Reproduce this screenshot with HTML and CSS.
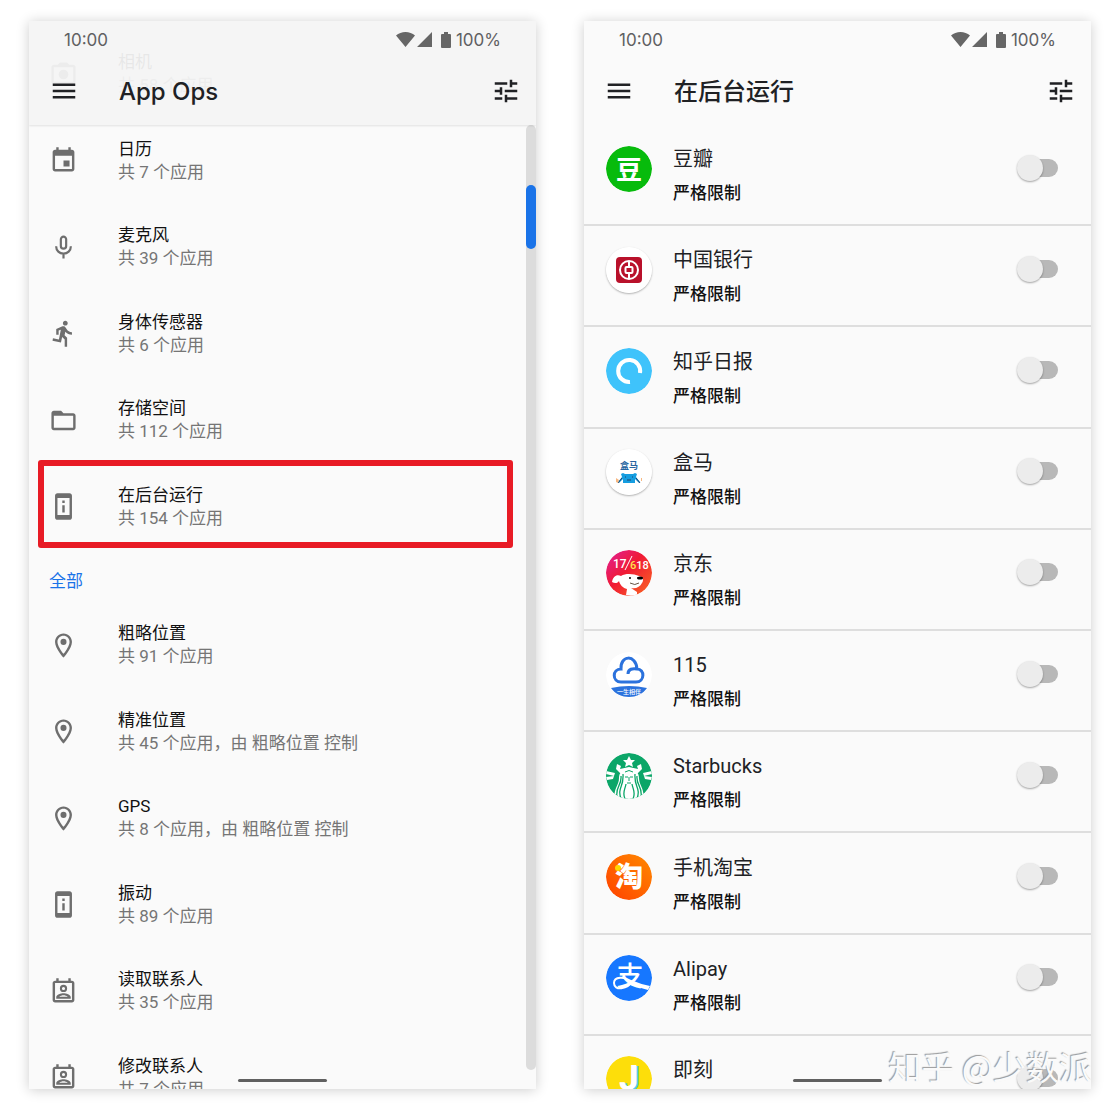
FILE: index.html
```html
<!DOCTYPE html>
<html lang="zh-CN">
<head>
<meta charset="utf-8">
<meta name="viewport" content="width=device-width, initial-scale=1">
<title>App Ops</title>
<link rel="stylesheet" href="styles.css">
</head>
<body>
<svg class="sprite" aria-hidden="true">
  <symbol id="menu" viewBox="0 0 24 24"><path d="M3 18h18v-2H3v2zm0-5h18v-2H3v2zm0-7v2h18V6H3z"/></symbol>
  <symbol id="tune" viewBox="0 0 24 24"><path d="M3 17v2h6v-2H3zM3 5v2h10V5H3zm10 16v-2h8v-2h-8v-2h-2v6h2zM7 9v2H3v2h4v2h2V9H7zm14 4v-2H11v2h10zm-6-4h2V7h4V5h-4V3h-2v6z"/></symbol>
  <symbol id="camera" viewBox="0 0 24 24"><path fill-rule="evenodd" d="M20 4h-3.200L15 2H9L7.200 4H4c-1.100 0-2 .9-2 2v12c0 1.100.9 2 2 2h16c1.100 0 2-.9 2-2V6c0-1.100-.9-2-2-2zm0 14H4V6h16v12z"/><circle cx="12" cy="12" r="4"/></symbol>
  <symbol id="event" viewBox="0 0 24 24"><path d="M17 12h-5v5h5v-5zM16 1v2H8V1H6v2H5c-1.110 0-1.990.9-1.990 2L3 19c0 1.100.89 2 2 2h14c1.100 0 2-.9 2-2V5c0-1.100-.9-2-2-2h-1V1h-2zm3 18H5V8h14v11z"/></symbol>
  <symbol id="mic" viewBox="0 0 24 24"><path d="M12 3a2.200 2.200 0 0 1 2.200 2.200v5.600a2.200 2.200 0 0 1-4.400 0V5.200A2.200 2.200 0 0 1 12 3zM5.900 11c0 3.700 2.800 6 6.100 6s6.100-2.300 6.100-6M12 17v4" fill="none" stroke="#6e6e6e" stroke-width="1.800"/></symbol>
  <symbol id="run" viewBox="0 0 24 24"><path d="M13.490 5.480c1.100 0 2-.9 2-2s-.9-2-2-2-2 .9-2 2 .9 2 2 2zm-3.600 13.900l1-4.400 2.100 2v6h2v-7.500l-2.100-2 .6-3c1.300 1.500 3.300 2.500 5.500 2.500v-2c-1.900 0-3.500-1-4.300-2.400l-1-1.600c-.4-.6-1-1-1.700-1-.3 0-.5.1-.8.1l-5.200 2.200v4.700h2v-3.400l1.800-.7-1.600 8.100-4.900-1-.4 2 7 1.400z"/></symbol>
  <symbol id="folder" viewBox="0 0 24 24"><path d="M20 6h-8l-2-2H4c-1.100 0-1.990.9-1.990 2L2 18c0 1.100.9 2 2 2h16c1.100 0 2-.9 2-2V8c0-1.100-.9-2-2-2zm0 12H4V8h16v10z"/></symbol>
  <symbol id="device" viewBox="0 0 24 24"><path d="M13 7h-2v2h2V7zm0 4h-2v6h2v-6zm4-9.990L7 1c-1.100 0-2 .9-2 2v18c0 1.100.9 2 2 2h10c1.100 0 2-.9 2-2V3c0-1.100-.9-1.990-2-1.990zM17 19H7V5h10v14z"/></symbol>
  <symbol id="place" viewBox="0 0 24 24"><path d="M12 2C8.130 2 5 5.130 5 9c0 5.250 7 13 7 13s7-7.750 7-13c0-3.870-3.130-7-7-7zM7 9c0-2.760 2.240-5 5-5s5 2.240 5 5c0 2.880-2.880 7.190-5 9.880C9.920 16.210 7 11.850 7 9z"/><circle cx="12" cy="9" r="2.500"/></symbol>
  <symbol id="contact" viewBox="0 0 24 24"><path fill-rule="evenodd" d="M6 1h2v2h8V1h2v2h1c1.100 0 2 .9 2 2v14c0 1.100-.9 2-2 2H5c-1.100 0-2-.9-2-2V5c0-1.100.9-2 2-2h1V1zM5 5v14h14V5H5zm7 1.500a3 3 0 1 1 0 6 3 3 0 0 1 0-6zm0 1.700a1.300 1.300 0 1 0 0 2.600 1.300 1.300 0 0 0 0-2.600zM6 18v-1.200c0-2.200 4-3.300 6-3.300s6 1.100 6 3.300V18H6zm2.500-1.600h7c-.8-.7-2.400-1.200-3.500-1.200s-2.700.5-3.500 1.200z"/></symbol>
  <symbol id="status" viewBox="0 0 56 18"><path d="M0 4.500C5-.2 14-.2 19 4.500L9.500 16zM36 1v15H21zM45 4q0-1 1-1h2V1h4v2h2q1 0 1 1v12q0 1-1 1h-8q-1 0-1-1z"/></symbol>
</svg>

<main class="screens">
  <section class="phone" aria-label="App Ops">
    <header class="top top-raised">
      <div class="status"><span>10:00</span><span class="status-right"><svg class="status-icons"><use href="#status"/></svg>100%</span></div>
      <div class="bar">
        <button class="icon-button" aria-label="菜单"><svg class="icon-lg"><use href="#menu"/></svg></button>
        <h1>App Ops</h1>
        <button class="icon-button" aria-label="筛选"><svg class="icon-lg"><use href="#tune"/></svg></button>
      </div>
    </header>
    <nav class="ops">
      <a class="op" href="#"><svg class="icon"><use href="#camera"/></svg><span><b>相机</b><small>共 58 个应用</small></span></a>
      <a class="op" href="#"><svg class="icon"><use href="#event"/></svg><span><b>日历</b><small>共 7 个应用</small></span></a>
      <a class="op" href="#"><svg class="icon"><use href="#mic"/></svg><span><b>麦克风</b><small>共 39 个应用</small></span></a>
      <a class="op" href="#"><svg class="icon"><use href="#run"/></svg><span><b>身体传感器</b><small>共 6 个应用</small></span></a>
      <a class="op" href="#"><svg class="icon"><use href="#folder"/></svg><span><b>存储空间</b><small>共 112 个应用</small></span></a>
      <a class="op op-marked" href="#"><svg class="icon"><use href="#device"/></svg><span><b>在后台运行</b><small>共 154 个应用</small></span></a>
      <h2>全部</h2>
      <a class="op" href="#"><svg class="icon"><use href="#place"/></svg><span><b>粗略位置</b><small>共 91 个应用</small></span></a>
      <a class="op" href="#"><svg class="icon"><use href="#place"/></svg><span><b>精准位置</b><small>共 45 个应用，由 粗略位置 控制</small></span></a>
      <a class="op" href="#"><svg class="icon"><use href="#place"/></svg><span><b>GPS</b><small>共 8 个应用，由 粗略位置 控制</small></span></a>
      <a class="op" href="#"><svg class="icon"><use href="#device"/></svg><span><b>振动</b><small>共 89 个应用</small></span></a>
      <a class="op" href="#"><svg class="icon"><use href="#contact"/></svg><span><b>读取联系人</b><small>共 35 个应用</small></span></a>
      <a class="op" href="#"><svg class="icon"><use href="#contact"/></svg><span><b>修改联系人</b><small>共 7 个应用</small></span></a>
    </nav>
    <div class="scrollbar"><div class="scroll-thumb"></div></div>
    <div class="home-pill"></div>
  </section>

  <section class="phone" aria-label="在后台运行">
    <header class="top">
      <div class="status"><span>10:00</span><span class="status-right"><svg class="status-icons"><use href="#status"/></svg>100%</span></div>
      <div class="bar">
        <button class="icon-button" aria-label="菜单"><svg class="icon-lg"><use href="#menu"/></svg></button>
        <h1>在后台运行</h1>
        <button class="icon-button" aria-label="筛选"><svg class="icon-lg"><use href="#tune"/></svg></button>
      </div>
    </header>
    <div class="apps">
      <label class="app">
        <svg class="logo" viewBox="0 0 46 46"><circle cx="23" cy="23" r="23" fill="#07bb0c"/><text x="23" y="33" font-size="26" font-weight="700" fill="#fff" text-anchor="middle">豆</text></svg>
        <span><b>豆瓣</b><small>严格限制</small></span><input type="checkbox" role="switch">
      </label>
      <label class="app">
        <svg class="logo logo-plate" viewBox="0 0 46 46"><circle cx="23" cy="23" r="23" fill="#fff"/><rect x="10" y="10" width="26" height="26" rx="4" fill="#b9112b"/><g fill="none" stroke="#fff" stroke-width="2"><circle cx="23" cy="23" r="9"/><rect x="19.500" y="20" width="7" height="6" rx="1"/><path d="M23 14v6M23 26v6"/></g></svg>
        <span><b>中国银行</b><small>严格限制</small></span><input type="checkbox" role="switch">
      </label>
      <label class="app">
        <svg class="logo" viewBox="0 0 46 46"><circle cx="23" cy="23" r="23" fill="#3fc3fb"/><path d="M34 25A11 11 0 1 0 24 34" fill="none" stroke="#fff" stroke-width="4"/></svg>
        <span><b>知乎日报</b><small>严格限制</small></span><input type="checkbox" role="switch">
      </label>
      <label class="app">
        <svg class="logo logo-plate" viewBox="0 0 46 46"><circle cx="23" cy="23" r="23" fill="#fff"/><text x="23" y="20" font-size="9" font-weight="700" fill="#2864a0" text-anchor="middle">盒马</text><path d="M17 24l2 1h8l2-1 2 1-1 3 4 5-1 1-4-4v4H17v-4l-4 4-1-1 4-5-1-3z" fill="#159de0"/><path d="M19 28h1M26 28h1M21 31h4M16 29l-4 5M30 29l4 5" stroke="#23456b" fill="none"/><path d="M10 29l3 2-1 3-2-1zM35 29h1v3h-1z" fill="#f7b780"/></svg>
        <span><b>盒马</b><small>严格限制</small></span><input type="checkbox" role="switch">
      </label>
      <label class="app">
        <svg class="logo" viewBox="0 0 46 46"><defs><linearGradient id="jd" x2="1" y2="1"><stop stop-color="#e0209a"/><stop offset=".45" stop-color="#f01a35"/><stop offset="1" stop-color="#fb6a20"/></linearGradient></defs><circle cx="23" cy="23" r="23" fill="url(#jd)"/><text x="7" y="18" font-size="12" font-weight="500" fill="#fff">17</text><text x="24" y="19" font-size="11" font-weight="500" fill="#fff"><tspan fill="#ffe34d">6</tspan>18</text><path d="M26 6l-7 14" stroke="#fff"/><path d="M6 32c1-6 5-8 9-6 5-3 13-2 18 0 4 1 5 4 3 7-2 4-6 6-11 5l6 4v3c-4 1-8 1-11 0l1-6c-4-1-7-4-8-8-1 2-4 3-7 1z" fill="#fff"/><ellipse cx="34" cy="28" rx="3" ry="1.500"/><circle cx="24" cy="28" r="1"/><path d="M24 33q5 3 9 0" fill="none" stroke="#654"/></svg>
        <span><b>京东</b><small>严格限制</small></span><input type="checkbox" role="switch">
      </label>
      <label class="app">
        <svg class="logo" viewBox="0 0 46 46"><circle cx="23" cy="23" r="23" fill="#fff"/><path d="M15 30h15c9 0 9-13 1-13C30 2 14 3 15 17c-9 0-9 13 0 13zM22 22c0-5 5-6 9-5" fill="none" stroke="#2b72dd" stroke-width="3"/><path d="M5 36q18-4 36 0c-8 12-28 12-36 0z" fill="#2b72dd"/><text x="23" y="42" font-size="6" font-weight="500" fill="#fff" text-anchor="middle">一生相伴</text></svg>
        <span><b>115</b><small>严格限制</small></span><input type="checkbox" role="switch">
      </label>
      <label class="app">
        <svg class="logo" viewBox="0 0 46 46"><defs><clipPath id="disc"><circle cx="23" cy="23" r="23"/></clipPath></defs><g clip-path="url(#disc)"><path fill="#0ba668" d="M0 0h46v46H0z"/><path d="M23 3l2 4h4l-3 3 1 4-4-2-4 2 1-4-3-3h4zM11 11l4 2-1 3 9-2 9 2-1-3 4-2 1 5-4 4H14l-4-4zM0 18l9 2-1 3-8-2zM0 24l8-1-1 3-6 1zM46 18l-9 2 1 3 8-2zM46 24l-8-1 1 3 6 1z" fill="#fff"/><path d="M23 16c-7 0-10 4-10 9 0 8-6 10-4 21h28c2-11-4-13-4-21 0-5-3-9-10-9z" fill="#fff"/><path d="M15 23c1 10-6 10-4 22M17 21c1 14-6 13-2 25M31 23c-1 10 6 10 4 22M29 21c-1 14 6 13 2 25M20 31c-1 6-4 8-1 15M26 31c1 6 4 8 1 15" fill="none" stroke="#0ba668" stroke-width="1.300"/><path d="M19 24h3M24 24h3M21 30h4M23 24v4M19 19q4-3 8 0" fill="none" stroke="#0ba668"/></g></svg>
        <span><b>Starbucks</b><small>严格限制</small></span><input type="checkbox" role="switch">
      </label>
      <label class="app">
        <svg class="logo" viewBox="0 0 46 46"><defs><linearGradient id="tb" x1="1" x2="0" y2="1"><stop stop-color="#ff8a00"/><stop offset="1" stop-color="#ff4000"/></linearGradient></defs><circle cx="23" cy="23" r="23" fill="url(#tb)"/><text x="23" y="33" font-size="28" font-weight="900" fill="#fff" text-anchor="middle">淘</text><circle cx="12" cy="14" r="3" fill="#ffd500"/></svg>
        <span><b>手机淘宝</b><small>严格限制</small></span><input type="checkbox" role="switch">
      </label>
      <label class="app">
        <svg class="logo" viewBox="0 0 46 46"><circle cx="23" cy="23" r="23" fill="#1677ff"/><text x="24" y="31" font-size="27" font-weight="500" fill="#fff" text-anchor="middle">支</text><path d="M27 28C18 20 8 22 8 28c0 8 13 7 20-3" fill="none" stroke="#fff" stroke-width="2"/><path d="M25 25q9 4 19 6l-2 4q-11-3-18-8z" fill="#fff"/></svg>
        <span><b>Alipay</b><small>严格限制</small></span><input type="checkbox" role="switch">
      </label>
      <label class="app">
        <svg class="logo" viewBox="0 0 46 46"><circle cx="23" cy="23" r="23" fill="#fdde0a"/><text x="15" y="35" font-size="35" font-weight="700" fill="#55c8ee">J</text><text x="13" y="34" font-size="35" font-weight="700" fill="#fff">J</text></svg>
        <span><b>即刻</b><small>严格限制</small></span><input type="checkbox" role="switch">
      </label>
    </div>
    <div class="home-pill"></div>
    <div class="watermark">知乎 @少数派</div>
  </section>
</main>
</body>
</html>
```
FILE: styles.css
```css
* { box-sizing: border-box; }

body {
  margin: 0;
  background: #fff;
  color: #202124;
  font-family: Roboto, "Noto Sans CJK SC", sans-serif;
}

.sprite { position: absolute; width: 0; height: 0; }

.screens {
  display: grid;
  grid-template-columns: 1fr 1fr;
  gap: 48px;
  height: 100vh;
  padding: 21px 29px 23px;
}

.phone {
  position: relative;
  display: flex;
  flex-direction: column;
  min-height: 0;
  overflow: hidden;
  background: #fafafa;
  box-shadow: 0 1px 12px rgba(0, 0, 0, .2);
}

/* Header */
.top { flex: none; height: 104px; }

.top-raised {
  position: absolute;
  z-index: 1;
  inset: 0 0 auto;
  background: rgba(244, 244, 244, .94);
  box-shadow: 0 1px 2px rgba(0, 0, 0, .1);
}

.status {
  display: flex;
  align-items: center;
  justify-content: space-between;
  height: 38px;
  padding: 0 35px;
  color: #5f6062;
  font: 400 17px/20px Inter, sans-serif;
}

.status-right { display: flex; align-items: center; gap: 4px; }
.status-icons { width: 56px; height: 18px; fill: #666; }

.bar {
  display: flex;
  align-items: center;
  height: 64px;
  padding: 0 15px 0 20px;
}

h1 {
  flex: 1;
  margin: 0;
  padding: 2px 0 0 40px;
  font: 500 24px/32px Inter, "Noto Sans CJK SC", sans-serif;
}

.icon-button { display: flex; padding: 0; border: 0; background: none; }
.icon-lg { width: 30px; height: 30px; fill: #202124; }
.icon { flex: none; width: 29px; height: 29px; fill: #6e6e6e; }

/* Permission list, scrolled below the header */
.ops {
  display: flex;
  flex: none;
  flex-direction: column;
  height: calc(100% + 22px);
  margin-top: 10px;
}

.op {
  position: relative;
  display: flex;
  flex: 1;
  align-items: center;
  gap: 40px;
  padding-left: 20px;
  color: inherit;
  text-decoration: none;
}

.op b, .op small, .app b, .app small { display: block; }
.op b { color: #111; font-size: 17px; font-weight: 400; line-height: 23px; }
.op small { color: #757575; font-size: 17px; line-height: 23px; }

.op-marked::after {
  content: "";
  position: absolute;
  inset: -4px 23px 2px 9px;
  border: 6px solid #e81b25;
  border-radius: 3px;
}

h2 {
  height: 52px;
  margin: 0;
  padding: 19px 20px 0;
  color: #1a73e8;
  font-size: 17px;
  font-weight: 400;
  line-height: 24px;
}

.scrollbar {
  position: absolute;
  inset: 104px 0 19px auto;
  width: 10px;
  padding-top: 60px;
  border-radius: 5px;
  background: #dcdcdc;
}

.scroll-thumb { height: 64px; border-radius: 5px; background: #1a73e8; }

.home-pill {
  position: absolute;
  bottom: 7px;
  left: 50%;
  width: 89px;
  height: 3px;
  margin-left: -45px;
  border-radius: 2px;
  background: #606060;
}

/* App list */
.apps {
  display: flex;
  flex: none;
  flex-direction: column;
  height: calc(100% - 56px);
}

.app {
  display: flex;
  flex: 1;
  align-items: center;
  padding: 0 33px 0 22px;
  border-bottom: 2px solid #dedede;
}

.app span { flex: 1; padding: 3px 0 0 21px; }
.app b { font-size: 20px; font-weight: 400; line-height: 34px; }
.app small { color: #111; font-size: 17px; font-weight: 500; line-height: 34px; }

.logo {
  width: 46px;
  height: 46px;
  margin-bottom: 12px;
  border-radius: 50%;
}

.logo-plate { box-shadow: 0 1px 2px rgba(0, 0, 0, .3); }

input {
  position: relative;
  width: 41px;
  height: 26px;
  margin: 0 0 14px;
  appearance: none;
}

input::before {
  content: "";
  position: absolute;
  inset: 4px 0 4px 7px;
  border-radius: 9px;
  background: #b8b8b8;
}

input::after {
  content: "";
  position: absolute;
  inset: 0 auto 0 0;
  width: 26px;
  border-radius: 50%;
  background: #ececec;
  box-shadow: 0 1px 2px rgba(0, 0, 0, .35);
}

.watermark {
  position: absolute;
  right: -1px;
  bottom: 0;
  color: #fafafa;
  font-family: "Noto Sans CJK SC", sans-serif;
  font-size: 33px;
  line-height: 46px;
  text-shadow: -1px -1px 1px #999;
  white-space: nowrap;
}
```
